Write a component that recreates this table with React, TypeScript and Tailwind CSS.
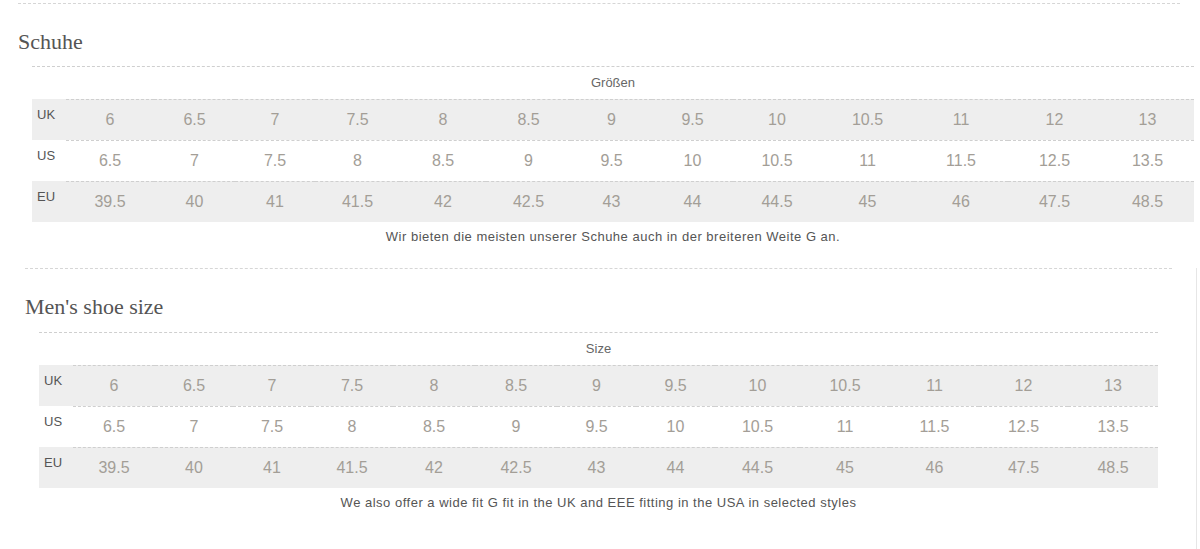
const ROWS = [
  { label: "UK", values: ["6", "6.5", "7", "7.5", "8", "8.5", "9", "9.5", "10", "10.5", "11", "12", "13"], grey: true },
  { label: "US", values: ["6.5", "7", "7.5", "8", "8.5", "9", "9.5", "10", "10.5", "11", "11.5", "12.5", "13.5"], grey: false },
  { label: "EU", values: ["39.5", "40", "41", "41.5", "42", "42.5", "43", "44", "44.5", "45", "46", "47.5", "48.5"], grey: true },
];

const SizeTable = ({
  heading,
  note,
  cols,
  width,
}: {
  heading: string;
  note: string;
  cols: string;
  width: string;
}) => (
  <div className={width}>
    <div className="border-t border-dashed border-[#cfcfcf] h-[33px] flex items-center justify-center text-[13px] text-[#666]">
      {heading}
    </div>
    {ROWS.map((row) => (
      <div key={row.label} className={`grid ${cols} ${row.grey ? "bg-[#eeeeee]" : "bg-white"}`}>
        <div className="border-t border-transparent h-[41px] pl-[5px] pt-[7px] text-[13px] leading-[16px] text-[#555]">
          {row.label}
        </div>
        {row.values.map((v, i) => (
          <div
            key={i}
            className="border-t border-dashed border-[#cfcfcf] h-[41px] flex items-center justify-center text-[16px] text-[#a39e97]"
          >
            {v}
          </div>
        ))}
      </div>
    ))}
    <p className="mt-[8px] text-center text-[13px] leading-[14px] tracking-[0.5px] text-[#555]">{note}</p>
  </div>
);

export default function App() {
  return (
    <div className="min-h-[549px] bg-white font-['Liberation_Sans',Arial,sans-serif]">
      {/* Schuhe */}
      <section className="pt-[3px]">
        <div className="ml-[18px] w-[1162px] border-t border-dashed border-[#d6d6d6]" />
        <h2 className="ml-[18px] mt-[25px] font-['Liberation_Serif',Georgia,serif] text-[22px] leading-[26px] text-[#555]">
          Schuhe
        </h2>
        <div className="ml-[32px] mt-[11px]">
          <SizeTable
            heading="Größen"
            note="Wir bieten die meisten unserer Schuhe auch in der breiteren Weite G an."
            width="w-[1162px]"
            cols="grid-cols-[34px_88px_81px_80px_85px_86px_85px_81px_81px_88px_93px_94px_93px_93px]"
          />
        </div>
      </section>

      {/* Men's */}
      <section className="mt-[24px] w-[1197px] min-h-[284px] border-r border-[#e6e6e6]">
        <div className="ml-[25px] w-[1147px] border-t border-dashed border-[#d6d6d6]" />
        <h2 className="ml-[25px] mt-[25px] font-['Liberation_Serif',Georgia,serif] text-[22px] leading-[26px] text-[#555]">
          Men's shoe size
        </h2>
        <div className="ml-[39px] mt-[12px]">
          <SizeTable
            heading="Size"
            note="We also offer a wide fit G fit in the UK and EEE fitting in the USA in selected styles"
            width="w-[1119px]"
            cols="grid-cols-[34px_82px_78px_78px_82px_82px_82px_79px_79px_85px_90px_89px_89px_90px]"
          />
        </div>
      </section>
    </div>
  );
}
